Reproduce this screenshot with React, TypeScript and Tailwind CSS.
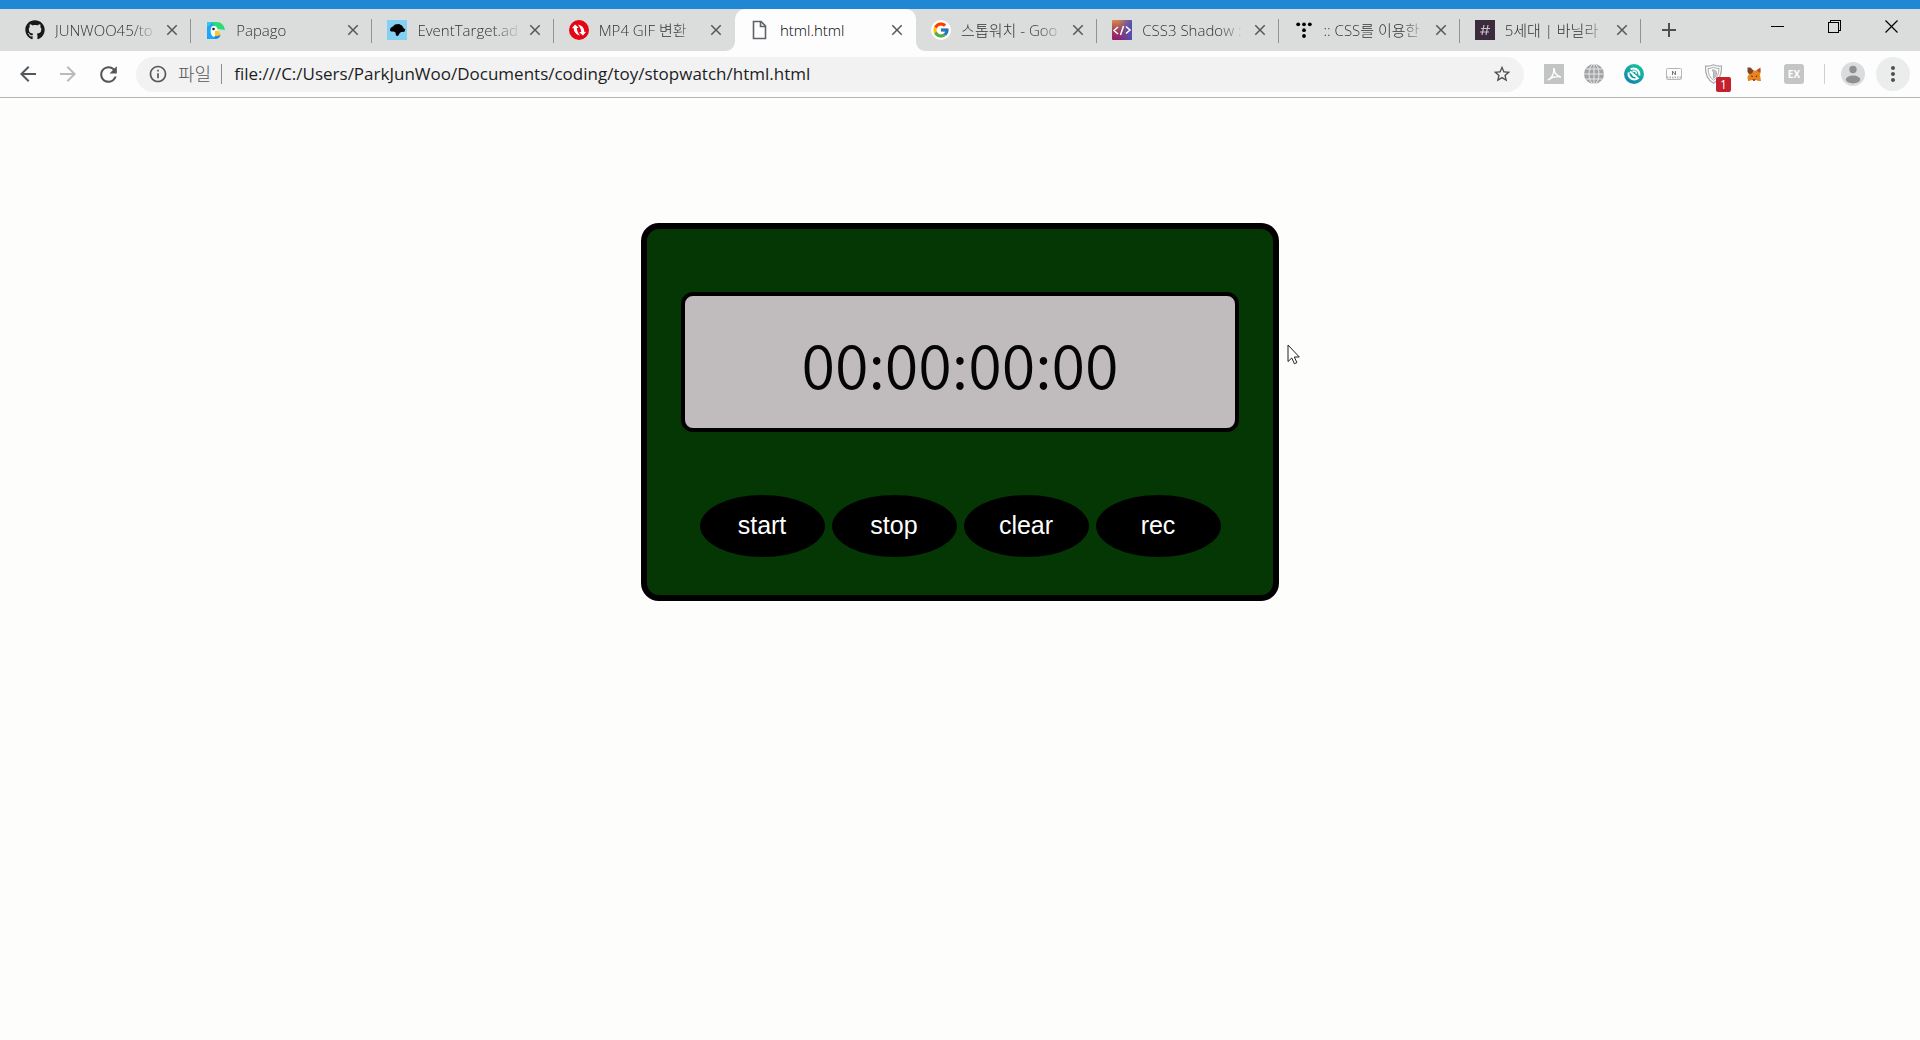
import React from "react";
import { FaGithub } from "react-icons/fa";
import { FcGoogle } from "react-icons/fc";
import {
  MdAdd,
  MdArrowBack,
  MdArrowForward,
  MdClose,
  MdInfoOutline,
  MdMoreVert,
  MdRefresh,
  MdStarBorder,
} from "react-icons/md";

const UI_FONT = "font-['Open_Sans','Noto_Sans_CJK_KR',sans-serif]";

function PapagoIcon() {
  return (
    <svg viewBox="0 0 20 20" className="size-5">
      <path d="M1 2h9v17H1z" fill="#1ba7f5" />
      <path d="M5 2h6c4 0 7 3 8 8l-7-1-3-3z" fill="#2bdc6e" />
      <path d="M1 2h5L3 6 1 7z" fill="#35c6ee" />
      <path d="M5 8c1-3 5-3 6 0l1 4-4 5c-3-1-4-5-3-9z" fill="#fff" />
      <circle cx="7.500" cy="9" r="1.300" fill="#222" />
      <path d="M9 11c3-1 5 1 5.500 4L9 16.500z" fill="#ffc61c" />
      <path d="M9 16.500l5.500-1.500c-.5 2.500-2.500 4-5.500 4z" fill="#1a86e8" />
    </svg>
  );
}

function MdnIcon() {
  return (
    <svg viewBox="0 0 20 20" className="size-5">
      <path d="M0 0h20v20H0z" fill="#83d0f2" />
      <path
        d="M3 10.500L3.500 8 6.500 6 8 4.500l4-.5 3 1.500 1.500 2.500 1.800 1.500-.8 2.200-3.500.3-1.500 1.500-1.500 2.500-2-.5-.5-3-2-1L4 11.500z"
        fill="#000"
      />
    </svg>
  );
}

function ConvertIcon() {
  return (
    <svg viewBox="0 0 20 20" className="size-5">
      <circle cx="10" cy="10" r="10" fill="#e30613" />
      <path d="M2.800 8.200L6 4.500l3.800 3.200-2 .2c.2 2.800 1.200 5 3.200 7.600-4-.8-6.300-3.500-6.300-7.400z" fill="#fff" />
      <path d="M17.200 11.800L14 15.500l-3.800-3.200 2-.2c-.2-2.800-1.200-5-3.200-7.600 4 .8 6.300 3.500 6.300 7.400z" fill="#fff" />
    </svg>
  );
}

function FileIcon() {
  return (
    <svg viewBox="0 0 20 20" className="size-5" fill="none" stroke="#5f6368" strokeWidth="1.600">
      <path d="M3.500 1.500h7.500l4.500 4.500v12.500h-12z" />
      <path d="M10.500 1.500V6.500h5" />
    </svg>
  );
}

function GoogleIcon() {
  return (
    <span className="flex size-5 items-center justify-center rounded-full bg-white">
      <FcGoogle size={18} />
    </span>
  );
}

function CodeIcon() {
  return (
    <svg viewBox="0 0 20 20" className="size-5">
      <defs>
        <linearGradient id="code-left" x1="0" y1="0" x2="0" y2="1">
          <stop offset="0" stopColor="#d98a45" />
          <stop offset=".55" stopColor="#a03c62" />
          <stop offset="1" stopColor="#951a6d" />
        </linearGradient>
        <linearGradient id="code-right" x1="0" y1="0" x2="1" y2="0">
          <stop offset=".3" stopColor="#4d50b8" stopOpacity="0" />
          <stop offset="1" stopColor="#4d50b8" />
        </linearGradient>
      </defs>
      <rect width="20" height="20" rx="1" fill="url(#code-left)" />
      <rect width="20" height="20" rx="1" fill="url(#code-right)" />
      <path d="M6 7l-4 3.500L6 14M14 6.500l4 3.500-4 3.500M11.500 6l-3 9" fill="none" stroke="#fff" strokeWidth="1.500" />
    </svg>
  );
}

function DotsIcon() {
  return (
    <svg viewBox="0 0 20 20" className="size-5">
      <circle cx="4.200" cy="4.300" r="1.900" />
      <circle cx="10" cy="4.300" r="1.900" />
      <circle cx="15.800" cy="4.300" r="1.900" />
      <circle cx="10" cy="10.200" r="1.900" />
      <circle cx="10" cy="16" r="1.900" />
    </svg>
  );
}

function HashIcon() {
  return (
    <svg viewBox="0 0 20 20" className="size-5">
      <path d="M0 0h20v20H0z" fill="#3b2b3d" />
      <path d="M9 5l-2 10M13 5l-2 10M6 8.500h9M5 12h9" stroke="#c9bfca" strokeWidth="1.200" />
    </svg>
  );
}

type Tab = { title: string; icon: React.ReactNode; active?: boolean; divider?: boolean };

const tabs: Tab[] = [
  { title: "JUNWOO45/to", icon: <FaGithub size={20} color="#191717" />, divider: true },
  { title: "Papago", icon: <PapagoIcon />, divider: true },
  { title: "EventTarget.ad", icon: <MdnIcon />, divider: true },
  { title: "MP4 GIF 변환", icon: <ConvertIcon /> },
  { title: "html.html", icon: <FileIcon />, active: true },
  { title: "스톱워치 - Goo", icon: <GoogleIcon />, divider: true },
  { title: "CSS3 Shadow :", icon: <CodeIcon />, divider: true },
  { title: ":: CSS를 이용한", icon: <DotsIcon />, divider: true },
  { title: "5세대 | 바닐라", icon: <HashIcon />, divider: true },
];

function TabFlare({ side }: { side: "left" | "right" }) {
  return (
    <svg
      viewBox="0 0 10 10"
      className={side === "left" ? "absolute bottom-0 right-full size-2.5" : "absolute bottom-0 left-full size-2.5"}
    >
      <path d={side === "left" ? "M10 0v10H0C6 10 10 6 10 0z" : "M0 0v10h10C4 10 0 6 0 0z"} fill="#fdfdfd" />
    </svg>
  );
}

function BrowserTab({ tab }: { tab: Tab }) {
  return (
    <div
      className={
        tab.active
          ? "relative flex h-full min-w-0 flex-1 items-center rounded-t-[10px] bg-[#fdfdfd] pl-[15px] pr-[11px]"
          : "relative flex h-full min-w-0 flex-1 items-center pl-[15px] pr-[11px]"
      }
    >
      {tab.active && <TabFlare side="left" />}
      {tab.active && <TabFlare side="right" />}
      <span className="flex size-5 shrink-0 items-center justify-center">{tab.icon}</span>
      <button
        type="button"
        className={
          tab.active
            ? "ml-2.5 min-w-0 flex-1 whitespace-nowrap text-left text-[15px] font-light leading-5 text-black"
            : "ml-2.5 min-w-0 flex-1 whitespace-nowrap text-left text-[15px] font-light leading-5 text-[#303338] [mask-image:linear-gradient(to_right,black_75%,transparent)]"
        }
      >
        {tab.title}
      </button>
      <button type="button" aria-label={`Close ${tab.title}`} className="ml-1.5 flex size-4 shrink-0 items-center justify-center text-[#55585c]">
        <MdClose size={18} className="shrink-0" />
      </button>
      {tab.divider && <span className="absolute right-0 top-2.5 h-6 w-px bg-[#8f9296]" />}
    </div>
  );
}

function WindowControls() {
  const cell = "flex h-9 w-[57px] items-center justify-center text-black";
  return (
    <div className="ml-auto flex self-start">
      <button type="button" aria-label="Minimize" className={cell}>
        <svg viewBox="0 0 14 14" className="size-3.5" fill="none" stroke="currentColor" shapeRendering="crispEdges">
          <path d="M0 6.500h13" />
        </svg>
      </button>
      <button type="button" aria-label="Restore" className={cell}>
        <svg viewBox="0 0 14 14" className="size-3.5" fill="none" stroke="currentColor" shapeRendering="crispEdges">
          <path d="M.5 2.500h10v10H.5zM2.500 2V.5h10v10H11" />
        </svg>
      </button>
      <button type="button" aria-label="Close window" className={cell}>
        <svg viewBox="0 0 14 14" className="size-3.5" fill="none" stroke="currentColor" strokeWidth="1.200">
          <path d="M.5.500l12 12M12.500.500l-12 12" />
        </svg>
      </button>
    </div>
  );
}

function PdfExt() {
  return (
    <svg viewBox="0 0 20 20" className="size-5">
      <path d="M0 0h20v20H0z" fill="#c3c4c4" />
      <path d="M4 16c4-2 6-7 6-12 0 5 3 8 7 9-5-1-9 0-13 3z" fill="none" stroke="#fff" strokeWidth="1.400" />
    </svg>
  );
}

function GlobeExt() {
  return (
    <svg viewBox="0 0 20 20" className="size-5">
      <circle cx="10" cy="10" r="10" fill="#a2a4a5" />
      <g fill="none" stroke="#e8e9e9" strokeWidth="1">
        <path d="M0 10h20M10 0v20M2 5h16M2 15h16" />
        <ellipse cx="10" cy="10" rx="5" ry="10" />
      </g>
    </svg>
  );
}

function SwirlExt() {
  return (
    <svg viewBox="0 0 20 20" className="size-5">
      <defs>
        <linearGradient id="swirl" x1=".8" y1="0" x2=".2" y2="1">
          <stop offset="0" stopColor="#16c79a" />
          <stop offset="1" stopColor="#157fae" />
        </linearGradient>
      </defs>
      <circle cx="10" cy="10" r="10" fill="url(#swirl)" />
      <path
        d="M4.500 8.500C4 12.500 7 15.500 10.500 15.500c1.500 0 2.500-.5 3.300-1.200L6 7.500M15.500 11.500C16 7.500 13 4.500 9.500 4.500c-1.200 0-2 .3-2.800.8"
        fill="none"
        stroke="#fff"
        strokeWidth="2"
      />
      <path d="M8.500 7.500c2-1 4 0 4 2.200M8.500 9.500c0 2 2 3.300 4 2.500" fill="none" stroke="#fff" strokeWidth="1.600" />
    </svg>
  );
}

function CardExt() {
  return (
    <svg viewBox="0 0 20 20" className="size-5" fill="none">
      <rect x="2.500" y="4.500" width="15" height="11" rx="1" stroke="#b5b7b8" />
      <path d="M3 13.500h14" stroke="#b5b7b8" strokeWidth="2" strokeDasharray="1.500 1" />
      <path d="M8.500 11V7l3 4V7" stroke="#77797b" strokeWidth="1" />
    </svg>
  );
}

function ShieldExt() {
  return (
    <span className="relative">
      <svg viewBox="0 0 20 20" className="size-5" fill="none" stroke="#a9abac">
        <path d="M1.500 2Q6 2.500 9.500.800 13 2.500 17.500 2C18 10 15 16 9.500 19.300 4 16 1 10 1.500 2z" strokeWidth="1.200" />
        <path d="M4 4.500Q7 4.500 9.500 3.300 12 4.500 15 4.500C15 10 13 14 9.500 16.300 6 14 4 10 4 4.500z" />
        <path d="M8 6c3-.5 5 1 4.500 4-.4 2-1.500 3.500-3 4.500V8z" fill="#c2c4c5" />
      </svg>
      <span className="absolute left-3 top-[13px] flex h-[15px] w-[15px] items-center justify-center rounded-xs bg-[#c5202e] text-xs leading-none text-white">
        1
      </span>
    </span>
  );
}

function FoxExt() {
  return (
    <svg viewBox="0 0 20 20" className="size-5">
      <path d="M4 4l3.500 2.500h4.500L16 4l.5 4-.5 3 1 6h-3l-2-1H8l-3 1H4l-.5-4L5 10z" fill="#ea8420" />
      <path d="M3.500 3.500h3l3 3-1.500 3-3 .5-1.500-2z" fill="#7a4628" />
      <path d="M16.500 3.500L13 6l1 2 2.500.5z" fill="#a8561d" />
      <path d="M7 11.500l2 .5-1 1.200zM13.500 11.500l-2 .5 1 1.200zM8.500 15.500h3l-.7 1.200H9.200z" fill="#3a2414" />
    </svg>
  );
}

function ExExt() {
  return (
    <span className="flex size-5 items-center justify-center rounded-[3px] bg-[#c4c5c5] text-[10px] font-bold leading-none text-white">
      EX
    </span>
  );
}

const extensions: [string, React.ReactNode][] = [
  ["PDF", <PdfExt />],
  ["Web", <GlobeExt />],
  ["Swirl", <SwirlExt />],
  ["Card", <CardExt />],
  ["Shield", <ShieldExt />],
  ["Fox", <FoxExt />],
  ["EX", <ExExt />],
];

function Toolbar() {
  const nav = "flex size-10 items-center justify-center text-[#55585b]";
  return (
    <div className="flex h-[47px] items-center border-b border-[#b4b6b5] bg-[#fdfdfd] pl-2 pr-2.5">
      <button type="button" aria-label="Back" className={nav}>
        <MdArrowBack size={24} />
      </button>
      <button type="button" aria-label="Forward" disabled className="flex size-10 items-center justify-center text-[#b9bbbd]">
        <MdArrowForward size={24} />
      </button>
      <button type="button" aria-label="Reload" className={nav}>
        <MdRefresh size={25} />
      </button>
      <div className="ml-2 flex h-[35px] min-w-0 flex-1 items-center rounded-full bg-[#f1f2f1] px-3 leading-6">
        <MdInfoOutline size={20} className="shrink-0 text-[#55585b]" />
        <label htmlFor="url" className="ml-2.5 border-r border-[#8b8d8f] pr-2.5 text-[18px] font-light leading-5 text-[#55585b]">
          파일
        </label>
        <input
          id="url"
          type="text"
          defaultValue="file:///C:/Users/ParkJunWoo/Documents/coding/toy/stopwatch/html.html"
          className="ml-3 min-w-0 flex-1 bg-transparent text-[17px] leading-6 text-[#1c1d1f] outline-none"
        />
        <button type="button" aria-label="Bookmark" className="flex size-5 items-center justify-center text-[#4d5053]">
          <MdStarBorder size={20} />
        </button>
      </div>
      <div className="ml-2.5 flex items-center">
        {extensions.map(([name, icon]) => (
          <button key={name} type="button" aria-label={name} className="flex size-10 items-center justify-center">
            {icon}
          </button>
        ))}
      </div>
      <span className="ml-2.5 h-5 w-px bg-[#cfd1d1]" />
      <button type="button" aria-label="Profile" className="ml-4 flex size-6 items-center justify-center">
        <svg viewBox="0 0 24 24" className="size-6">
          <circle cx="12" cy="12" r="12" fill="#dadcdd" />
          <circle cx="12" cy="7.500" r="3.700" fill="#8e9092" />
          <ellipse cx="12" cy="17.500" rx="7.200" ry="3.900" fill="#8e9092" />
        </svg>
      </button>
      <button type="button" aria-label="Menu" className="ml-[11px] flex size-[34px] items-center justify-center rounded-full bg-[#ebecec] text-[#4d5053]">
        <MdMoreVert size={24} />
      </button>
    </div>
  );
}

function Stopwatch() {
  return (
    <section className="relative w-[638px] rounded-[18px] border-6 border-black bg-[#053705] px-[34px] pb-[38px] pt-[63px]">
      <div className="flex h-[140px] items-center justify-center rounded-xl border-4 border-black bg-[#c0bbbc]">
        <time className="font-['Noto_Sans_CJK_KR',sans-serif] text-[61px] font-[350] leading-none text-[#050505]">
          00:00:00:00
        </time>
      </div>
      <div className="mt-[63px] flex justify-center gap-[7px] font-['Liberation_Sans',Arial,sans-serif] text-[25px] text-white">
        {["start", "stop", "clear", "rec"].map((label) => (
          <button key={label} type="button" className="h-[62px] w-[125px] rounded-[50%] bg-black">
            {label}
          </button>
        ))}
      </div>
      <svg viewBox="0 0 14 21" className="absolute left-full top-[115px] ml-3.5 h-[21px] w-3.5" fill="#fff" stroke="#222">
        <path d="M1 1v16.500l3.800-3.500 2.600 5.800 2.500-1.200-2.600-5.600h5z" />
      </svg>
    </section>
  );
}

export default function App() {
  return (
    <div className={`flex min-h-screen flex-col bg-[#fdfdfc] ${UI_FONT}`}>
      <div className="h-[9px] bg-[#1f87d3]" />
      <header>
        <div className="flex h-[42px] items-center bg-[#dadddb] pl-2.5">
          <div className="flex h-full min-w-0 flex-1">
            {tabs.map((tab) => (
              <BrowserTab key={tab.title} tab={tab} />
            ))}
          </div>
          <div className="flex h-full w-[279px] shrink-0 items-center">
            <button type="button" aria-label="New tab" className="ml-4 flex size-6 items-center justify-center text-[#4d5053]">
              <MdAdd size={24} />
            </button>
            <WindowControls />
          </div>
        </div>
        <Toolbar />
      </header>
      <main className="flex flex-1 items-start justify-center pt-[125px]">
        <Stopwatch />
      </main>
    </div>
  );
}
